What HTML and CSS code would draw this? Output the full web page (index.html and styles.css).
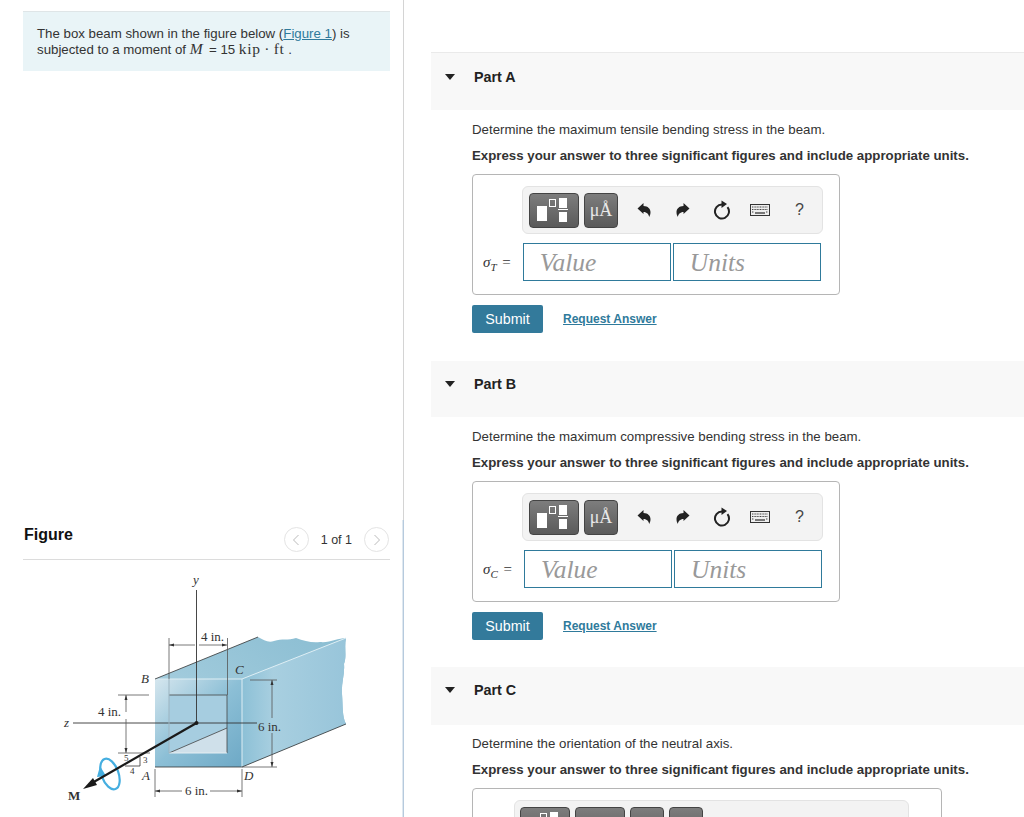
FILE: index.html
```html
<!DOCTYPE html>
<html lang="en">
<head>
    <meta charset="UTF-8">
    <title>Box beam bending stress</title>
    <link rel="stylesheet" href="styles.css">
</head>
<body>

    <!-- shared toolbar icons -->
    <svg class="icon-defs" aria-hidden="true">
        <symbol id="icon-undo" viewBox="0 0 14 16">
            <path d="M0.500 6.500 L6.500 1 L6.500 4 C11 4 13.500 7 13.500 10 C13.500 12 13 13.500 12.200 15 C11.800 12.500 10 10 6.500 10 L6.500 12 Z"/>
        </symbol>
        <symbol id="icon-redo" viewBox="0 0 14 16">
            <path d="M13.500 6.500 L7.500 1 L7.500 4 C3 4 0.500 7 0.500 10 C0.500 12 1 13.500 1.800 15 C2.200 12.500 4 10 7.500 10 L7.500 12 Z"/>
        </symbol>
        <symbol id="icon-reset" viewBox="0 0 18 20">
            <path d="M9 4.500 A7 7 0 1 0 14.500 7.200" fill="none" stroke="#222" stroke-width="2"/>
            <path d="M8.500 0.500 L14 4 L8.500 8 Z"/>
        </symbol>
        <symbol id="icon-keyboard" viewBox="0 0 20 12">
            <rect x="0.500" y="0.500" width="19" height="11" fill="#eee" stroke="#333"/>
            <path d="M2 3h16M2 5.500h16M2 8h2M16 8h2" stroke="#444" stroke-width="1.200" stroke-dasharray="1 .6" fill="none"/>
            <path d="M5 9h10" stroke="#444" stroke-width="1.400"/>
        </symbol>
        <symbol id="icon-templates" viewBox="0 0 50 34">
            <rect x="8" y="13" width="10" height="15" fill="#fff"/>
            <rect x="20.500" y="6.500" width="6" height="7" fill="none" stroke="#fff"/>
            <rect x="30" y="5" width="8" height="10" fill="#fff"/>
            <rect x="29" y="16" width="10" height="1" fill="#fff"/>
            <rect x="30" y="19" width="8" height="10" fill="#fff"/>
        </symbol>
    </svg>

    <div class="page">
        <div class="left-col">
            <div class="problem-section">
                <div class="intro">
                    The box beam shown in the figure below (<a href="#">Figure 1</a>) is
                    subjected to a moment of <span class="math math-var"><i>M</i></span> = 15 <span class="math">kip · ft</span> .
                </div>
            </div>

            <div class="figure-section">
                <div class="figure-head">
                    <h2>Figure</h2>
                    <div class="pager">
                        <span class="pager-btn">
                            <svg width="8" height="12" viewBox="0 0 8 12"><path d="M6.500 1 L1.500 6 L6.500 11" fill="none" stroke="#bbb"/></svg>
                        </span>
                        <span class="pager-count">1 of 1</span>
                        <span class="pager-btn">
                            <svg width="8" height="12" viewBox="0 0 8 12"><path d="M1.500 1 L6.500 6 L1.500 11" fill="none" stroke="#bbb"/></svg>
                        </span>
                    </div>
                </div>

                <svg class="beam" width="300" height="240" viewBox="60 570 300 240">
                    <defs>
                        <linearGradient id="topFace" x1="0" y1="1" x2="1" y2="0">
                            <stop offset="0" stop-color="#b4d6e4"/>
                            <stop offset="0.5" stop-color="#9cc8da"/>
                            <stop offset="1" stop-color="#8abdd2"/>
                        </linearGradient>
                        <linearGradient id="sideFace" x1="0" y1="0" x2="1" y2="0">
                            <stop offset="0" stop-color="#8cc0d6"/>
                            <stop offset="0.3" stop-color="#a8cfe0"/>
                            <stop offset="1" stop-color="#98c5da"/>
                        </linearGradient>
                        <linearGradient id="frontFace" x1="0" y1="0" x2="1" y2="1">
                            <stop offset="0" stop-color="#d5e6ee"/>
                            <stop offset="0.5" stop-color="#8cbfd6"/>
                            <stop offset="1" stop-color="#6ea9c6"/>
                        </linearGradient>
                    </defs>

                    <!-- beam body -->
                    <path d="M155 679 L258 637 C264 640 268 643 274 641 C282 638 288 641 296 638 C304 641 312 643 320 642 C330 643 338 638 346 638 C344 648 347 656 344 664 C345 674 341 684 342 694 C343 706 342 716 346 724 L242 767 L242 679 Z" fill="url(#topFace)"/>
                    <path d="M242 679 L346 638 C344 648 347 656 344 664 C345 674 341 684 342 694 C343 706 342 716 346 724 L242 767 Z" fill="url(#sideFace)"/>
                    <rect x="155" y="679" width="87" height="88" fill="url(#frontFace)"/>
                    <rect x="169" y="695" width="58" height="58" fill="#a6cde0"/>
                    <path d="M169 753 L227 728 L227 753 Z" fill="#cfe0ea"/>
                    <path d="M155 679 H242 L346 638 M242 679 V767" fill="none" stroke="#deeef4"/>
                    <path d="M155 679 L258 637 M242 767 L346 724 M155 767 H242" fill="none" stroke="#333" stroke-width="0.800"/>
                    <path d="M169 753 L227 728 M169 695 H227 V753" fill="none" stroke="#444" stroke-width="0.800"/>
                    <path d="M169 753 H227" fill="none" stroke="#e4eef3"/>

                    <!-- axes -->
                    <path d="M196.500 590 V723 M73 723 H257" fill="none" stroke="#333" stroke-width="0.900"/>

                    <!-- dimensions -->
                    <g fill="none" stroke="#555" stroke-width="0.800">
                        <path d="M169 638 V679 M227.500 638 V695"/>
                        <path d="M169 645 H195 M199 645 H227"/>
                        <path d="M118 695 H149 M118 753 H150 M126 695 V712 M126 719 V753"/>
                        <path d="M250 680 H277 M242 767 H277 M272 680 V718 M272 733 V767"/>
                        <path d="M155 769 V797 M242 769 V797 M155 791 H182 M210 791 H242"/>
                    </g>
                    <path d="M169 679 V753" fill="none" stroke="#9db4c0" stroke-width="1"/>
                    <g fill="#333">
                        <path d="M169 645 L174 643.500 V646.500 Z M227 645 L222 643.500 V646.500 Z"/>
                        <path d="M126 695 L124.500 700 H127.500 Z M126 753 L124.500 748 H127.500 Z"/>
                        <path d="M272 680 L270.500 685 H273.500 Z M272 767 L270.500 762 H273.500 Z"/>
                        <path d="M155 791 L160 789.500 V792.500 Z M242 791 L237 789.500 V792.500 Z"/>
                    </g>

                    <!-- 3-4-5 slope triangle -->
                    <path d="M125 766 H140 V757" fill="none" stroke="#333" stroke-width="0.800"/>

                    <!-- moment -->
                    <ellipse cx="110" cy="774" rx="8.500" ry="16" transform="rotate(-20 110 774)" fill="none" stroke="#45aee0" stroke-width="2.200"/>
                    <path d="M97 777 L100 766 L106 776 Z" fill="#45aee0"/>
                    <path d="M196.500 723 L92 783" fill="none" stroke="#1a1a1a" stroke-width="2.200"/>
                    <path d="M83 789 L93 778 L97 785 Z" fill="#1a1a1a"/>
                    <circle cx="196.500" cy="723" r="2" fill="#1a1a1a"/>

                    <!-- labels -->
                    <g class="beam-label">
                        <text x="193" y="584" class="it">y</text>
                        <text x="201" y="641">4 in.</text>
                        <text x="98" y="716">4 in.</text>
                        <text x="258" y="731">6 in.</text>
                        <text x="185" y="795">6 in.</text>
                        <text x="64" y="727" class="it">z</text>
                        <text x="141" y="683" class="it">B</text>
                        <text x="235" y="674" class="it">C</text>
                        <text x="142" y="780" class="it">A</text>
                        <text x="244" y="780" class="it">D</text>
                        <text x="68" y="800" class="bold">M</text>
                        <text x="124" y="761" class="small">5</text>
                        <text x="143" y="763" class="small">3</text>
                        <text x="130" y="774" class="small">4</text>
                    </g>
                </svg>
            </div>
        </div>

        <div class="right-col">

            <div class="part part-a">
                <div class="part-head"><span class="caret"></span>Part A</div>
                <div class="part-body">
                    <p class="prompt">Determine the maximum tensile bending stress in the beam.</p>
                    <p class="prompt strong">Express your answer to three significant figures and include appropriate units.</p>
                    <div class="answer-box">
                        <div class="toolbar">
                            <button class="tool-btn wide"><svg width="50" height="34"><use href="#icon-templates"/></svg></button>
                            <button class="tool-btn unit">μÅ</button>
                            <svg class="tool-icon" width="14" height="16"><use href="#icon-undo"/></svg>
                            <svg class="tool-icon" width="14" height="16"><use href="#icon-redo"/></svg>
                            <svg class="tool-icon" width="18" height="20"><use href="#icon-reset"/></svg>
                            <svg class="tool-icon" width="20" height="12"><use href="#icon-keyboard"/></svg>
                            <span class="tool-help">?</span>
                        </div>
                        <div class="answer-row">
                            <span class="answer-label"><i>σ<sub>T</sub></i> =</span>
                            <input class="answer-input" placeholder="Value">
                            <input class="answer-input" placeholder="Units">
                        </div>
                    </div>
                    <div class="actions">
                        <button class="submit">Submit</button>
                        <a class="request" href="#">Request Answer</a>
                    </div>
                </div>
            </div>

            <div class="part part-b">
                <div class="part-head"><span class="caret"></span>Part B</div>
                <div class="part-body">
                    <p class="prompt">Determine the maximum compressive bending stress in the beam.</p>
                    <p class="prompt strong">Express your answer to three significant figures and include appropriate units.</p>
                    <div class="answer-box">
                        <div class="toolbar">
                            <button class="tool-btn wide"><svg width="50" height="34"><use href="#icon-templates"/></svg></button>
                            <button class="tool-btn unit">μÅ</button>
                            <svg class="tool-icon" width="14" height="16"><use href="#icon-undo"/></svg>
                            <svg class="tool-icon" width="14" height="16"><use href="#icon-redo"/></svg>
                            <svg class="tool-icon" width="18" height="20"><use href="#icon-reset"/></svg>
                            <svg class="tool-icon" width="20" height="12"><use href="#icon-keyboard"/></svg>
                            <span class="tool-help">?</span>
                        </div>
                        <div class="answer-row">
                            <span class="answer-label"><i>σ<sub>C</sub></i> =</span>
                            <input class="answer-input" placeholder="Value">
                            <input class="answer-input" placeholder="Units">
                        </div>
                    </div>
                    <div class="actions">
                        <button class="submit">Submit</button>
                        <a class="request" href="#">Request Answer</a>
                    </div>
                </div>
            </div>

            <div class="part part-c">
                <div class="part-head"><span class="caret"></span>Part C</div>
                <div class="part-body">
                    <p class="prompt">Determine the orientation of the neutral axis.</p>
                    <p class="prompt strong">Express your answer to three significant figures and include appropriate units.</p>
                    <div class="answer-box wide-box">
                        <div class="toolbar wide-toolbar">
                            <button class="tool-btn wide"><svg width="50" height="34"><use href="#icon-templates"/></svg></button>
                            <button class="tool-btn wide"></button>
                            <button class="tool-btn"></button>
                            <button class="tool-btn"></button>
                        </div>
                    </div>
                </div>
            </div>

        </div>
    </div>

</body>
</html>
```

FILE: styles.css
```css
html, body {
    height: 817px;
    margin: 0;
    overflow: hidden;
    background-color: white;
}
body {
    font-family: "Liberation Sans", Arial, sans-serif;
    font-size: 13.270px;
    color: #333;
}
.icon-defs {
    position: absolute;
    width: 0;
    height: 0;
}
.page {
    display: grid;
    grid-template-columns: 404px 1fr;
    height: 817px;
    overflow: hidden;
}

/* Left column */
.left-col {
    display: flex;
    flex-direction: column;
    overflow: hidden;
}
.problem-section {
    box-sizing: border-box;
    height: 520px;
    padding: 11px 13px 0 23px;
    border-right: 1px solid #d4d4d4;
}
.intro {
    box-sizing: border-box;
    height: 60px;
    padding: 14px 14px 0;
    background-color: #e9f4f7;
    border-top: 1px solid #dfe5e7;
    line-height: 16px;
}
.intro a {
    color: #2f7a9b;
}
.math {
    font-family: "Liberation Serif", serif;
    font-size: 15.500px;
    line-height: 0;
    letter-spacing: 0.700px;
    word-spacing: -1px;
}
.math-var {
    margin-right: 2px;
}
.figure-section {
    flex: 1;
    padding: 0 13px 0 23px;
    border-right: 1px solid #b6cadd;
    box-shadow: inset -1px 0 0 #dfe8f0;
}
.figure-head {
    display: flex;
    justify-content: space-between;
    align-items: center;
    height: 39px;
    border-bottom: 1px solid #dcdcdc;
}
.figure-head h2 {
    margin: 0 0 9px 1px;
    font-size: 16px;
    color: #111;
}
.pager {
    display: flex;
    align-items: center;
    margin: 0 1px 0 0;
}
.pager-btn {
    display: flex;
    align-items: center;
    justify-content: center;
    box-sizing: border-box;
    width: 25px;
    height: 25px;
    border: 1px solid #e4e4e4;
    border-radius: 50%;
}
.pager-count {
    margin: 0 12px;
    font-size: 12.500px;
}
.beam {
    display: block;
    margin: 10px 0 0 37px;
}
.beam-label text {
    font-family: "Liberation Serif", serif;
    font-size: 13px;
    fill: #333;
}
.beam-label .it {
    font-style: italic;
}
.beam-label .bold {
    font-weight: bold;
}
.beam-label .small {
    font-size: 9px;
}

/* Right column */
.right-col {
    padding: 52px 0 0 27px;
    overflow: hidden;
}
.part-head {
    display: flex;
    align-items: flex-start;
    box-sizing: border-box;
    height: 58px;
    padding: 16px 0 0 14px;
    background-color: #f8f8f8;
    border-top: 1px solid #eaeaea;
    font-size: 14.300px;
    font-weight: bold;
    line-height: 16px;
    color: #222;
}
.part-b .part-head {
    height: 56px;
    padding-top: 15px;
    border-top: 0;
}
.part-c .part-head {
    padding-top: 15px;
    border-top: 0;
}
.caret {
    width: 0;
    height: 0;
    margin: 5px 19px 0 0;
    border-left: 5.500px solid transparent;
    border-right: 5.500px solid transparent;
    border-top: 6px solid #222;
}
.part-body {
    padding: 12px 0 0 41px;
}
.part-c .part-body {
    padding-top: 11px;
}
.part-a {
    height: 309px;
}
.part-b {
    height: 306px;
}
.prompt {
    margin: 0 0 10px;
    line-height: 16px;
}
.prompt.strong {
    font-weight: bold;
}
.answer-box {
    box-sizing: border-box;
    width: 368px;
    height: 121px;
    padding: 11px 15px 0 10px;
    border: 1px solid #b5b5b5;
    border-radius: 4px;
}
.wide-box {
    width: 470px;
    padding: 11px 32px 0 41px;
}
.toolbar {
    display: flex;
    align-items: center;
    box-sizing: border-box;
    width: 301px;
    height: 48px;
    margin-left: 39px;
    padding: 0 6px;
    background-color: #f3f3f3;
    border: 1px solid #e3e3e3;
    border-radius: 6px;
}
.wide-toolbar {
    width: 395px;
    margin-left: 0;
    padding: 0 5px;
}
.tool-btn {
    box-sizing: border-box;
    width: 34px;
    height: 35px;
    margin: 0 5px 0 0;
    padding: 0;
    background: linear-gradient(#7d7d7d, #5a5a5a);
    border: 1px solid #444;
    border-radius: 4px;
    color: #e8e8e8;
    font-family: "Liberation Serif", serif;
    font-size: 18px;
}
.tool-btn.wide {
    width: 50px;
}
.tool-btn svg {
    display: block;
    margin: -1px 0 0 -1px;
}
.tool-icon {
    flex: none;
    fill: #222;
}
.tool-btn.unit + .tool-icon {
    margin-left: 14px;
}
.tool-icon + .tool-icon {
    margin-left: 25px;
}
.tool-icon + .tool-icon + .tool-icon {
    margin-left: 23px;
}
.tool-icon + .tool-icon + .tool-icon + .tool-icon {
    margin-left: 19px;
}
.tool-help {
    margin-left: 25px;
    font-size: 16px;
    color: #444;
}
.answer-row {
    display: flex;
    align-items: center;
    gap: 2px;
    margin-top: 9px;
}
.answer-label {
    margin-right: 10px;
    font-family: "Liberation Serif", serif;
    font-size: 15px;
    word-spacing: 2px;
}
.answer-label sub {
    font-size: 11px;
    line-height: 0;
}
.answer-input {
    box-sizing: border-box;
    width: 148px;
    height: 38px;
    padding: 2px 0 0 16px;
    border: 1px solid #2f7a9b;
    border-radius: 0;
    outline: none;
    font-family: "Liberation Serif", serif;
    font-size: 25.500px;
    font-style: italic;
}
.answer-input::placeholder {
    color: #999;
    opacity: 1;
}
.actions {
    display: flex;
    align-items: center;
    margin-top: 10px;
}
.submit {
    width: 71px;
    height: 28px;
    padding: 0;
    background-color: #337a9b;
    border: none;
    border-radius: 2px;
    color: white;
    font-family: "Liberation Sans", Arial, sans-serif;
    font-size: 14.300px;
}
.request {
    margin: 0 0 0 20px;
    color: #2f7a9b;
    font-size: 12px;
    font-weight: bold;
}
```
